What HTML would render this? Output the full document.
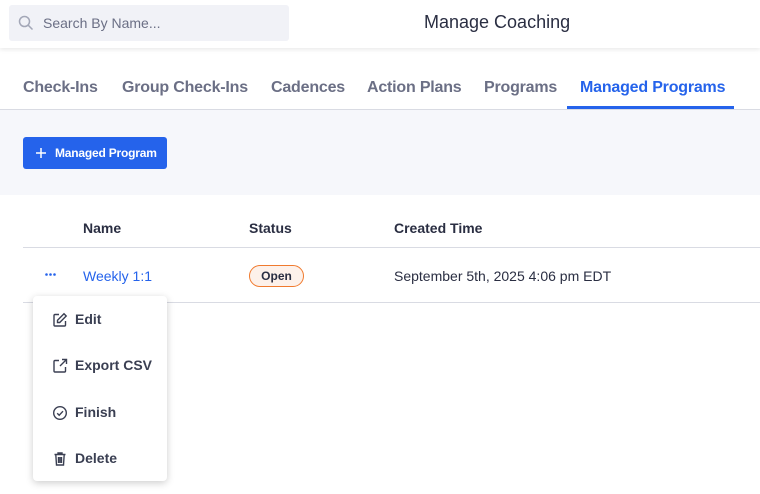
<!DOCTYPE html>
<html><head><style>
*{margin:0;padding:0;box-sizing:border-box}
body{width:760px;height:494px;background:#fff;font-family:"Liberation Sans",sans-serif;position:relative;overflow:hidden;color:#2a2e42}
.abs{position:absolute;white-space:nowrap}
.hdr{position:absolute;left:0;top:0;width:760px;height:48px;background:#fff;box-shadow:0 2px 4px rgba(0,0,0,.08);z-index:2}
.search{position:absolute;left:9px;top:5px;width:280px;height:36px;background:#f1f2f7;border-radius:3px}
.tab{position:absolute;top:79px;font-size:16px;font-weight:bold;color:#6b6f85;white-space:nowrap;letter-spacing:-0.2px}
.th{position:absolute;top:220px;font-size:14px;font-weight:bold;color:#2a2e42}
.mi{position:absolute;left:52px;font-size:14px;font-weight:bold;color:#3a3f52;white-space:nowrap}
.mi svg{position:absolute;left:0;top:1px}
.mi span{position:absolute;left:23px;top:0;white-space:nowrap}
</style></head><body>
<div class="hdr">
 <div class="search">
  <svg class="abs" style="left:9px;top:10px" width="16" height="16" viewBox="0 0 16 16"><circle cx="6.5" cy="6.5" r="5" fill="none" stroke="#a3a7b7" stroke-width="1.5"/><path d="M10.3 10.3L14.5 14.5" stroke="#a3a7b7" stroke-width="1.5"/></svg>
  <div class="abs" style="left:34px;top:10px;font-size:14px;color:#6b6f85">Search By Name...</div>
 </div>
 <div class="abs" style="left:424px;top:12px;font-size:18px;color:#2a2e42">Manage Coaching</div>
</div>
<div class="tab" style="left:23px">Check-Ins</div>
<div class="tab" style="left:122px">Group Check-Ins</div>
<div class="tab" style="left:271px">Cadences</div>
<div class="tab" style="left:367px">Action Plans</div>
<div class="tab" style="left:484px">Programs</div>
<div class="tab" style="left:580px;color:#2563eb">Managed Programs</div>
<div class="abs" style="left:567px;top:106px;width:167px;height:3px;background:#2563eb;z-index:1"></div>
<div class="abs" style="left:0;top:109px;width:760px;height:86px;background:#f6f7fb;border-top:1px solid #d9dbe3"></div>
<div class="abs" style="left:23px;top:137px;width:144px;height:32px;background:#2563eb;border-radius:3px;color:#fff;font-size:12px;font-weight:bold">
 <svg class="abs" style="left:13px;top:11px" width="10" height="10" viewBox="0 0 10 10"><path d="M5 0v10M0 5h10" stroke="#fff" stroke-width="1.5"/></svg>
 <div class="abs" style="left:32px;top:9px;letter-spacing:-0.2px">Managed Program</div>
</div>
<div class="th" style="left:83px">Name</div>
<div class="th" style="left:249px">Status</div>
<div class="th" style="left:394px">Created Time</div>
<div class="abs" style="left:23px;top:247px;width:737px;height:1px;background:#d9dbe3"></div>
<svg class="abs" style="left:45px;top:273px" width="11" height="3" viewBox="0 0 11 3"><circle cx="1.5" cy="1.5" r="1.3" fill="#2563eb"/><circle cx="5.5" cy="1.5" r="1.3" fill="#2563eb"/><circle cx="9.5" cy="1.5" r="1.3" fill="#2563eb"/></svg>
<div class="abs" style="left:83px;top:268px;font-size:14px;color:#2563eb">Weekly 1:1</div>
<div class="abs" style="left:249px;top:265px;width:55px;height:22px;border:1px solid #f07a2e;border-radius:11px;background:#fdf1ea;font-size:12px;font-weight:bold;text-align:center;line-height:20px;color:#2a2e42">Open</div>
<div class="abs" style="left:394px;top:268px;font-size:14px;color:#2a2e42">September 5th, 2025 4:06 pm EDT</div>
<div class="abs" style="left:23px;top:302px;width:737px;height:1px;background:#d9dbe3"></div>
<div class="abs" style="left:33px;top:296px;width:134px;height:185px;background:#fff;border-radius:4px;box-shadow:0 2px 8px rgba(0,0,0,.2);z-index:3"></div>
<div style="position:absolute;left:0;top:0;z-index:4">
<div class="mi" style="top:311px"><svg width="16" height="16" viewBox="0 0 16 16" fill="none" stroke="#3a3f52" stroke-width="1.4"><path d="M7 2.5H3a1 1 0 0 0-1 1v9.5a1 1 0 0 0 1 1h9.5a1 1 0 0 0 1-1V9"/><path d="M12 1.8l2.2 2.2-6.5 6.5H5.5V8.3z"/></svg><span>Edit</span></div>
<div class="mi" style="top:357px"><svg width="16" height="16" viewBox="0 0 16 16" fill="none" stroke="#3a3f52" stroke-width="1.4"><path d="M7 2.5H3a1 1 0 0 0-1 1v9.5a1 1 0 0 0 1 1h9.5a1 1 0 0 0 1-1V9"/><path d="M10 1.5h4.5V6M14.5 1.5L8 8"/></svg><span>Export CSV</span></div>
<div class="mi" style="top:404px"><svg width="16" height="16" viewBox="0 0 16 16" fill="none" stroke="#3a3f52" stroke-width="1.4"><circle cx="8" cy="8" r="6.3"/><path d="M5.2 8.2l2 2 3.8-4"/></svg><span>Finish</span></div>
<div class="mi" style="top:450px"><svg width="16" height="16" viewBox="0 0 16 16" fill="none" stroke="#3a3f52" stroke-width="1.4"><path d="M2.5 3.5h11M6 3.5V2h4v1.5M3.8 3.5l.7 10.5h7l.7-10.5M6.5 6v6M8 6v6M9.5 6v6"/></svg><span>Delete</span></div>
</div>
</body></html>
